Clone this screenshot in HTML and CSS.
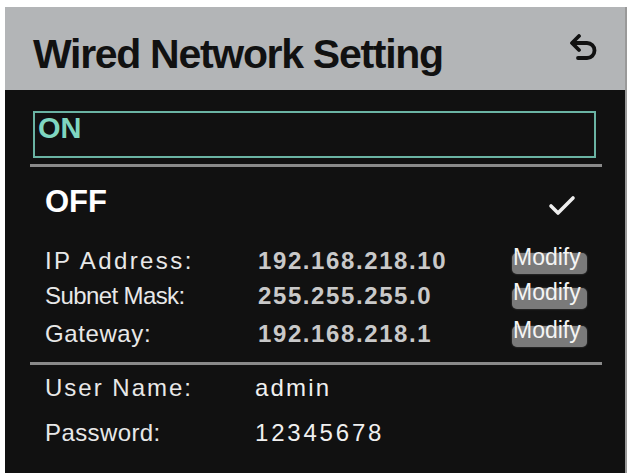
FILE: index.html
```
<!DOCTYPE html>
<html lang="en">
<head>
    <meta charset="UTF-8">
    <meta name="viewport" content="width=device-width, initial-scale=1.0">
    <title>Wired Network Setting</title>
    <link rel="stylesheet" href="styles.css">
</head>
<body>
    <div class="screen">
        <div class="header">
            <h1>Wired Network Setting</h1>
            <svg class="back" width="30" height="30" viewBox="0 0 30 30">
                <path d="M10 2 L3 9 L10 16" fill="none" stroke="#111" stroke-width="3.8" stroke-linecap="round" stroke-linejoin="round"/>
                <path d="M4 9 H18 A7.5 7.5 0 0 1 18 24 H9" fill="none" stroke="#111" stroke-width="3.8" stroke-linecap="round"/>
            </svg>
        </div>

        <div class="content">
            <div class="option selected">ON</div>
            <hr class="sep">
            <div class="option off">
                <span>OFF</span>
                <svg class="check" width="28" height="22" viewBox="0 0 28 22">
                    <path d="M3 12 L10 19 L25 4" fill="none" stroke="#eee" stroke-width="3.6" stroke-linecap="round" stroke-linejoin="round"/>
                </svg>
            </div>

            <div class="net">
                <div class="row">
                    <span class="label ip">IP Address:</span>
                    <span class="value">192.168.218.10</span>
                    <button class="modify">Modify</button>
                </div>
                <div class="row">
                    <span class="label mask">Subnet Mask:</span>
                    <span class="value">255.255.255.0</span>
                    <button class="modify">Modify</button>
                </div>
                <div class="row">
                    <span class="label gw">Gateway:</span>
                    <span class="value">192.168.218.1</span>
                    <button class="modify">Modify</button>
                </div>
            </div>

            <hr class="sep">

            <div class="account">
                <div class="row">
                    <span class="label user-label">User Name:</span>
                    <span class="user">admin</span>
                </div>
                <div class="row">
                    <span class="label pass-label">Password:</span>
                    <span class="user pass">12345678</span>
                </div>
            </div>
        </div>
    </div>
</body>
</html>
```

FILE: styles.css
```
body {
    margin: 0;
    background-color: #fff;
    font-family: 'Liberation Sans', Arial, sans-serif;
}
.screen {
    margin: 7px 5px 0 5px;
    height: 466px;
    background-color: #111;
    border-right: 2px solid #999;
    overflow: hidden;
}
.header {
    height: 83px;
    background-color: #b3b5b7;
    display: flex;
    align-items: center;
    justify-content: space-between;
    padding: 0 26px 0 28px;
}
.header h1 {
    margin: 12px 0 0 0;
    font-size: 41px;
    font-weight: bold;
    letter-spacing: -1.3px;
    color: #111;
}
.back {
    margin-top: 0;
}
.content {
    padding: 21px 23px 0 25px;
}
.option {
    color: #fff;
    font-weight: bold;
}
.option.selected {
    margin: 0 6px 0 3px;
    height: 43px;
    border: 2px solid #6ab3a3;
    color: #7fd6c0;
    font-size: 29px;
    line-height: 30px;
    padding-left: 3px;
}
.sep {
    margin: 6px 0 0 0;
    border: none;
    height: 3px;
    background-color: #8a8a8a;
}
.option.off {
    display: flex;
    justify-content: space-between;
    align-items: center;
    font-size: 31px;
    padding: 14px 26px 0 15px;
    height: 42px;
}
.check {
    margin-top: 6px;
}
.net {
    padding: 20px 15px 4px 15px;
}
.row {
    display: flex;
    align-items: center;
    color: #e8e8e8;
    font-size: 24px;
}
.net .row {
    height: 35px;
}
.net .row:last-child {
    height: 37px;
    padding-top: 2px;
}
.label {
    width: 213px;
}
.ip {
    letter-spacing: 2.4px;
}
.mask {
    letter-spacing: -0.6px;
}
.gw {
    letter-spacing: 0.6px;
}
.user-label {
    width: 210px;
    letter-spacing: 2px;
}
.pass-label {
    width: 210px;
    letter-spacing: 0.4px;
}
.value {
    width: 254px;
    color: #c9c9c9;
    font-weight: bold;
    letter-spacing: 1.6px;
}
.modify {
    width: 75px;
    height: 21px;
    margin-top: 5px;
    padding: 0 0 13px 1px;
    background-color: #7a7a7a;
    color: #f4f4f4;
    border: none;
    border-radius: 5px;
    box-shadow: 0 0 2px #555;
    font-family: 'Liberation Sans', Arial, sans-serif;
    font-size: 23px;
    line-height: 8px;
    text-align: left;
    white-space: nowrap;
    overflow: visible;
}
.account {
    padding: 0 15px 0 15px;
}
.account .row {
    height: 45px;
}
.user {
    color: #f0f0f0;
    letter-spacing: 2.2px;
}
.pass {
    letter-spacing: 2.8px;
}
```
